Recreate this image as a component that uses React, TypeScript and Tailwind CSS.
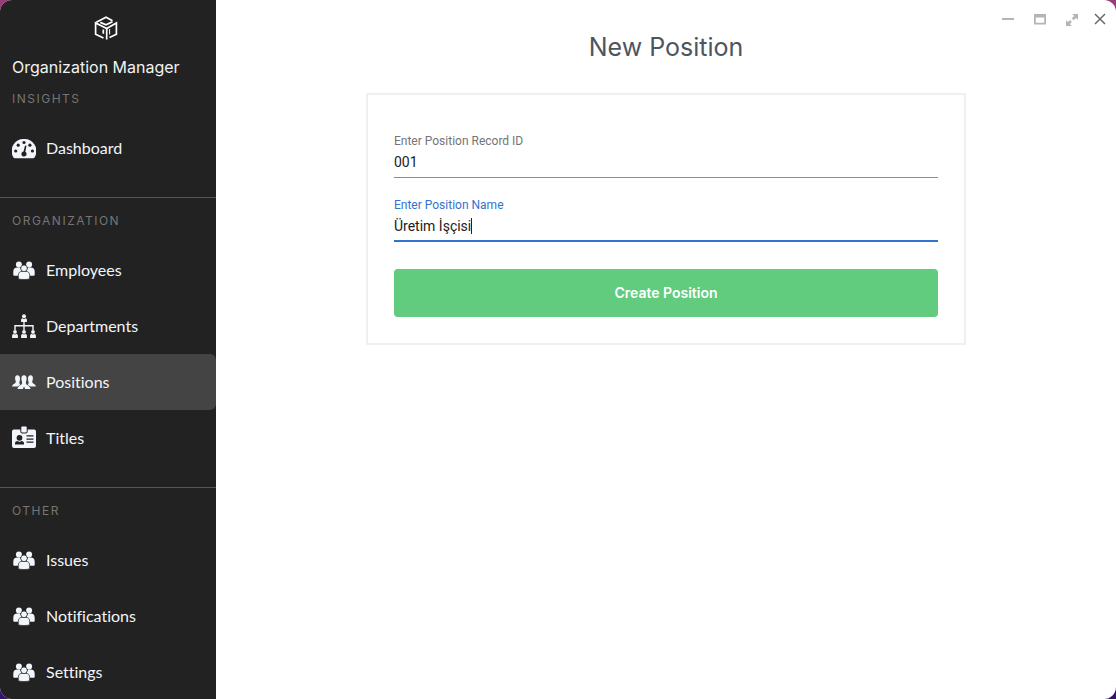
import { type ReactNode } from "react";

const Icon = ({ children }: { children: ReactNode }) => (
  <svg viewBox="0 0 24 24" className="size-6 shrink-0" fill="#f2f5fa" aria-hidden="true">
    {children}
  </svg>
);

const GaugeIcon = () => (
  <Icon>
    <path d="M12 3A12 12 0 0 0 1.200 20.900Q1.700 22.200 3 22.200H21Q22.300 22.200 22.800 20.900A12 12 0 0 0 12 3Z" />
    <g fill="#222">
      <circle cx="3.700" cy="15" r="1.600" />
      <circle cx="6.200" cy="9.200" r="1.600" />
      <circle cx="12" cy="6.500" r="1.600" />
      <circle cx="17.900" cy="9.200" r="1.600" />
      <circle cx="20.400" cy="15" r="1.600" />
      <path d="M13.600 9.500Q14.600 9.500 14.400 10.500L13.300 15.700A2.600 2.600 0 1 1 11.500 15.400L12.900 10.100Z" />
    </g>
  </Icon>
);

const PeopleIcon = () => (
  <Icon>
    <circle cx="6.900" cy="6.500" r="3" />
    <circle cx="17.100" cy="6.500" r="3" />
    <path d="M1.300 17V13.700Q1.300 9.500 5.500 9.500H8L11 17V17.800H2.500Q1.300 17.800 1.300 17ZM22.700 17V13.700Q22.700 9.500 18.500 9.500H16L13 17V17.800H21.500Q22.700 17.800 22.700 17Z" />
    <g stroke="#222" strokeWidth=".7">
      <path d="M6.300 20V17.500Q6.300 13.300 10.500 13.300H13.500Q17.700 13.300 17.700 17.500V20Q17.700 21.600 12 21.600T6.300 20Z" />
      <circle cx="12" cy="10.300" r="3.300" />
    </g>
  </Icon>
);

const OrgIcon = () => (
  <Icon>
    <path d="M11.300 7.500H12.700V11.100H21.700V16H20.300V12.500H12.700V16H11.300V12.500H3.700V16H2.300V11.100H11.300Z" />
    <circle cx="12" cy="2.200" r="2" />
    <path d="M9.100 8V6Q9.100 4.300 10.500 4.300L12 5.200 13.500 4.300Q14.900 4.300 14.900 6V8Z" />
    {[3, 12, 21].map((x) => (
      <g key={x}>
        <circle cx={x} cy="17.900" r="1.900" />
        <path transform={`translate(${x} 0)`} d="M-2.900 24V21.700Q-2.900 20-1.500 20L0 20.600 1.500 20Q2.900 20 2.900 21.700V24Z" />
      </g>
    ))}
  </Icon>
);

const TeamIcon = () => (
  <Icon>
    <path d="M5.400 5.200C3.600 5.200 3 6.700 3.100 8.500 3.200 10.200 4 11 3.700 12.300 3.300 14 .3 14.100.1 16.500H5.300Q7 15.600 8.100 14.900 7.400 13.700 7.300 12.300 8 10.500 8 8.500C8 6.500 7.200 5.200 5.400 5.200Z" />
    <path d="M18.600 5.200C20.400 5.200 21 6.700 20.900 8.500 20.800 10.200 20 11 20.300 12.300 20.700 14 23.700 14.100 23.900 16.500H18.700Q17 15.600 15.900 14.900 16.600 13.700 16.700 12.300 16 10.500 16 8.500C16 6.500 16.800 5.200 18.600 5.200Z" />
    <path d="M12 5.200C10 5.200 9.300 6.700 9.400 9 9.500 11 10.300 11.500 10.100 13.200 9.900 15.100 5.700 15.500 5.500 18.900H10.800L12 16.500 13.200 18.900H18.500C18.300 15.500 14.100 15.100 13.900 13.200 13.700 11.500 14.500 11 14.600 9 14.700 6.700 14 5.200 12 5.200Z" />
  </Icon>
);

const BadgeIcon = () => (
  <Icon>
    <path d="M2 3.500H8.300V5.300Q8.300 7.500 10.300 7.500H13.700Q15.700 7.500 15.700 5.300V3.500H22Q24 3.500 24 5.500V20Q24 22 22 22H2Q0 22 0 20V5.500Q0 3.500 2 3.500Z" />
    <rect x="9.300" y=".5" width="5.400" height="5.900" rx="1" />
    <g fill="#222">
      <circle cx="7.500" cy="11.800" r="2.900" />
      <path d="M3 18.500V17.600Q3 15 5.500 15L7.500 16 9.500 15Q12 15 12 17.600V18.500Z" />
      <path d="M14.500 9.300H21.500V10.600H14.500ZM14.500 12.400H21.500V13.700H14.500ZM14.500 15.500H21.500V16.800H14.500Z" />
    </g>
  </Icon>
);

const CubeLogo = () => (
  <svg viewBox="0 0 24 24" className="size-6" fill="none" stroke="#fff" strokeWidth="1.700" aria-label="Organization Manager" role="img">
    <path d="M2.300 6.200L12 1.300 18.500 4.700" />
    <path d="M6.300 6.400L12 8.800 18.500 5.700" />
    <path d="M9.500 22L1.600 18.200V7L12.700 12.600V23.500" />
    <path d="M15.500 21.500L22.400 18.200V7L12.700 12.600" />
    <path d="M9.300 13.500V17.800" />
    <path d="M15.600 13V18.500" strokeWidth="1" />
  </svg>
);

type Item = { label: string; icon: ReactNode };
const sections: { title: string; items: Item[] }[] = [
  { title: "INSIGHTS", items: [{ label: "Dashboard", icon: <GaugeIcon /> }] },
  {
    title: "ORGANIZATION",
    items: [
      { label: "Employees", icon: <PeopleIcon /> },
      { label: "Departments", icon: <OrgIcon /> },
      { label: "Positions", icon: <TeamIcon /> },
      { label: "Titles", icon: <BadgeIcon /> },
    ],
  },
  {
    title: "OTHER",
    items: [
      { label: "Issues", icon: <PeopleIcon /> },
      { label: "Notifications", icon: <PeopleIcon /> },
      { label: "Settings", icon: <PeopleIcon /> },
    ],
  },
];

function Sidebar() {
  return (
    <aside className="w-[216px] shrink-0 bg-[#222222]">
      <div className="flex justify-center pt-4 pr-1 pb-[15px]">
        <CubeLogo />
      </div>
      <div className="px-3 pb-2.5 font-['Inter',sans-serif] text-base leading-6 text-[#f2f2f2]">Organization Manager</div>
      <nav>
        {sections.map((s) => (
          <section key={s.title} className="border-b border-[#555555] pb-[21px] last:border-b-0 last:pb-0 not-first:pt-[13px]">
            <h2 className="px-3 font-['Inter',sans-serif] text-xs leading-5 tracking-[1.5px] text-[#757575]">
              {s.title}
            </h2>
            <ul className="pt-[11px]">
              {s.items.map((i) => (
                <li key={i.label}>
                  <a
                    href="#"
                    aria-current={i.label === "Positions" ? "page" : undefined}
                    className="flex h-14 items-center gap-[10px] rounded-r-md px-3 font-['Lato',sans-serif] text-base leading-6 text-[#f2f5fa] [font-variant-ligatures:none] aria-[current=page]:bg-[#444444]"
                  >
                    {i.icon}
                    {i.label}
                  </a>
                </li>
              ))}
            </ul>
          </section>
        ))}
      </nav>
    </aside>
  );
}

function WindowControls() {
  return (
    <div className="flex h-7 items-end justify-end gap-3 pr-2">
      <div className="flex gap-4">
        <button aria-label="Minimize">
          <svg viewBox="0 0 16 16" className="size-4" fill="#b3b5b8"><path d="M2 6H14V8H2Z" /></svg>
        </button>
        <button aria-label="Maximize">
          <svg viewBox="0 0 16 16" className="size-4" fill="#b3b5b8" fillRule="evenodd"><path d="M2 2H14V12.500H2ZM3.800 5.500V10.800H12.200V5.500Z" /></svg>
        </button>
        <button aria-label="Full screen">
          <svg viewBox="0 0 16 16" className="size-4" fill="#b3b5b8"><path d="M8.300 2H14V7.700L12 5.900 9.700 8.200 7.700 6.200 10.200 3.900ZM7.700 14H2V8.300L4 10.100 6 8.100 7.900 10 5.900 12Z" /></svg>
        </button>
      </div>
      <button aria-label="Close">
        <svg viewBox="0 0 16 16" className="size-4" fill="none" stroke="#666b70" strokeWidth="1.500"><path d="M3 2L13 12M13 2L3 12" /></svg>
      </button>
    </div>
  );
}

export default function App() {
  return (
    <div className="min-h-screen bg-[linear-gradient(to_bottom,#9b3c78,#35136e)]">
      <div className="flex h-screen overflow-hidden rounded-xl bg-white">
        <Sidebar />
        <main className="min-w-0 flex-1">
          <WindowControls />
          <h1 className="text-center font-['Inter',sans-serif] text-[25px] leading-[38px] text-[#4d565f]">New Position</h1>
          <form className="mx-auto mt-[27px] w-full max-w-[600px] border-2 border-[#f0f0f0] px-[26px] pt-9 pb-[26px] font-['Roboto',sans-serif]" onSubmit={(e) => e.preventDefault()}>
            <div className="flex flex-col border-b border-[#8d8d8d] pb-1">
              <label htmlFor="record" className="text-xs leading-5 text-[#757575]">Enter Position Record ID</label>
              <input id="record" defaultValue="001" className="h-[22px] w-full text-sm text-[#212121] outline-none" />
            </div>
            <div className="mt-[17px] flex flex-col border-b-2 border-[#3372cf] pb-[3px]">
              <label htmlFor="name" className="text-xs leading-5 text-[#3372cf]">Enter Position Name</label>
              <div className="flex h-[22px] items-center">
                <input id="name" defaultValue="Üretim İşçisi" className="field-sizing-content h-[22px] text-sm text-[#212121] outline-none" />
                <span className="h-4 w-px bg-[#212121]" />
              </div>
            </div>
            <button type="submit" className="mt-[27px] h-12 w-full rounded bg-[#61cb7e] font-['Inter',sans-serif] text-sm font-semibold text-white">
              Create Position
            </button>
          </form>
        </main>
      </div>
    </div>
  );
}
